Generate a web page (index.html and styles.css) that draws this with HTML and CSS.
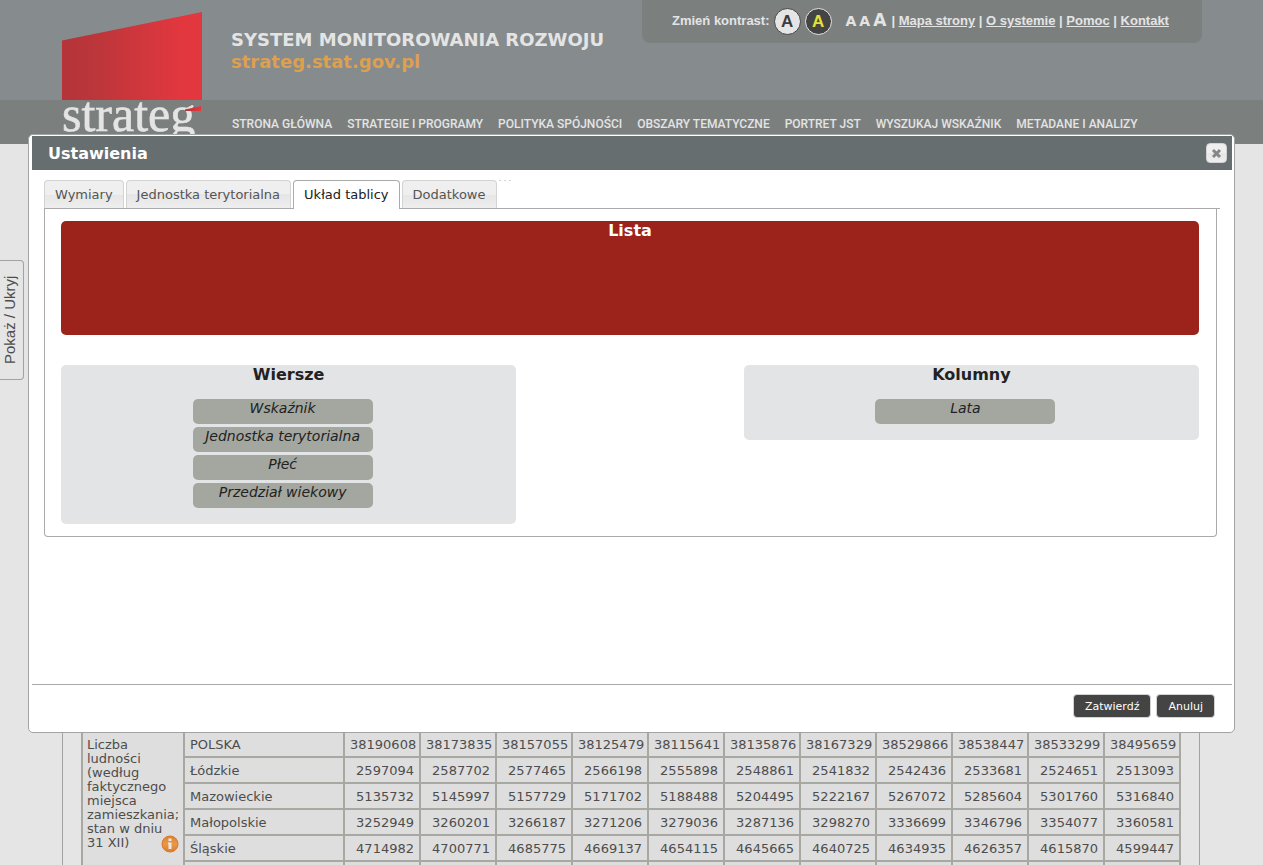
FILE: index.html
```html
<!DOCTYPE html>
<html lang="pl">
<head>
<meta charset="utf-8">
<title>STRATEG - System Monitorowania Rozwoju</title>
<link rel="stylesheet" href="styles.css">
</head>
<body>
<header class="header">
  <a class="logo" href="#" aria-label="strateg">
    <svg class="logo-art" width="142" height="138" viewBox="0 0 142 138">
      <defs>
        <linearGradient id="red" x1="0" x2="1" y1="0" y2="0">
          <stop offset="0" stop-color="#b43439"/>
          <stop offset="0.25" stop-color="#bc363a"/>
          <stop offset="0.85" stop-color="#e2373f"/>
          <stop offset="1" stop-color="#e3373f"/>
        </linearGradient>
      </defs>
      <path d="M0 28.500L140 0V88H0Z" fill="url(#red)"/>
      <text class="logo-text" x="0" y="119">strateg</text>
      <path d="M123 97.500L139 94V99H123Z" fill="url(#red)"/>
    </svg>
  </a>
  <div class="brand">
    <div class="brand-name">SYSTEM MONITOROWANIA ROZWOJU</div>
    <div class="brand-url">strateg.stat.gov.pl</div>
  </div>
  <div class="tools">
    <span>Zmień kontrast:</span>
    <button class="contrast contrast-light" type="button">A</button>
    <button class="contrast contrast-dark" type="button">A</button>
    <span class="sizes">
      <button class="size" type="button">A</button>
      <button class="size" type="button">A</button>
      <button class="size size-big" type="button">A</button>
    </span>
    <span class="links">| <a href="#">Mapa strony</a> | <a href="#">O systemie</a> | <a href="#">Pomoc</a> | <a href="#">Kontakt</a></span>
  </div>
  <nav class="nav">
    <a href="#">STRONA GŁÓWNA</a>
    <a href="#">STRATEGIE I PROGRAMY</a>
    <a href="#">POLITYKA SPÓJNOŚCI</a>
    <a href="#">OBSZARY TEMATYCZNE</a>
    <a href="#">PORTRET JST</a>
    <a href="#">WYSZUKAJ WSKAŹNIK</a>
    <a href="#">METADANE I ANALIZY</a>
  </nav>
</header>

<main class="content">
  <table class="data">
    <colgroup>
      <col class="col-name"><col class="col-region"><col span="11">
    </colgroup>
    <tbody>
      <tr>
        <th class="indicator" rowspan="6" scope="rowgroup">
          <div class="indicator-box">Liczba ludności (według faktycznego miejsca zamieszkania; stan w dniu 31&nbsp;XII)
            <svg class="info" width="18" height="18" viewBox="0 0 18 18">
              <defs><linearGradient id="orange" x1="0" x2="0" y1="0" y2="1"><stop offset="0" stop-color="#df8030"/><stop offset="0.500" stop-color="#e89a48"/><stop offset="1" stop-color="#dd7b2c"/></linearGradient></defs>
              <circle cx="9" cy="9" r="8" fill="url(#orange)" stroke="#d97829"/>
              <path d="M7.500 3.500H10.500V6H7.500ZM7 7.500H10.500V14H7.500V9H7Z" fill="#e9e9e9"/>
            </svg>
          </div>
        </th>
        <th scope="row">POLSKA</th><td>38190608</td><td>38173835</td><td>38157055</td><td>38125479</td><td>38115641</td><td>38135876</td><td>38167329</td><td>38529866</td><td>38538447</td><td>38533299</td><td>38495659</td>
      </tr>
      <tr><th scope="row">Łódzkie</th><td>2597094</td><td>2587702</td><td>2577465</td><td>2566198</td><td>2555898</td><td>2548861</td><td>2541832</td><td>2542436</td><td>2533681</td><td>2524651</td><td>2513093</td></tr>
      <tr><th scope="row">Mazowieckie</th><td>5135732</td><td>5145997</td><td>5157729</td><td>5171702</td><td>5188488</td><td>5204495</td><td>5222167</td><td>5267072</td><td>5285604</td><td>5301760</td><td>5316840</td></tr>
      <tr><th scope="row">Małopolskie</th><td>3252949</td><td>3260201</td><td>3266187</td><td>3271206</td><td>3279036</td><td>3287136</td><td>3298270</td><td>3336699</td><td>3346796</td><td>3354077</td><td>3360581</td></tr>
      <tr><th scope="row">Śląskie</th><td>4714982</td><td>4700771</td><td>4685775</td><td>4669137</td><td>4654115</td><td>4645665</td><td>4640725</td><td>4634935</td><td>4626357</td><td>4615870</td><td>4599447</td></tr>
      <tr><th scope="row"></th><td></td><td></td><td></td><td></td><td></td><td></td><td></td><td></td><td></td><td></td><td></td></tr>
    </tbody>
  </table>
</main>

<button class="side-tab" type="button">Pokaż / Ukryj</button>

<section class="dialog" role="dialog" aria-labelledby="dialog-title">
  <div class="dialog-bar">
    <h1 class="dialog-title" id="dialog-title">Ustawienia</h1>
    <button class="close" type="button" aria-label="Zamknij">
      <svg width="11" height="11" viewBox="0 0 11 11"><path d="M2 2L9 9M9 2L2 9" stroke="#868686" stroke-width="3"/></svg>
    </button>
  </div>
  <div class="dialog-body">
    <div class="tabs" role="tablist">
      <button class="tab" type="button" role="tab">Wymiary</button>
      <button class="tab" type="button" role="tab">Jednostka terytorialna</button>
      <button class="tab tab-active" type="button" role="tab" aria-selected="true">Układ tablicy</button>
      <button class="tab" type="button" role="tab">Dodatkowe</button>
      <span class="stub"></span><span class="stub"></span><span class="stub"></span>
    </div>
    <div class="panel" role="tabpanel">
      <div class="zone zone-list"><h2 class="zone-title">Lista</h2></div>
      <div class="zones">
        <div class="zone">
          <h2 class="zone-title">Wiersze</h2>
          <ul class="items">
            <li class="item">Wskaźnik</li>
            <li class="item">Jednostka terytorialna</li>
            <li class="item">Płeć</li>
            <li class="item">Przedział wiekowy</li>
          </ul>
        </div>
        <div class="zone">
          <h2 class="zone-title">Kolumny</h2>
          <ul class="items"><li class="item">Lata</li></ul>
        </div>
      </div>
    </div>
  </div>
  <div class="dialog-foot">
    <button class="action" type="button">Zatwierdź</button>
    <button class="action" type="button">Anuluj</button>
  </div>
</section>
</body>
</html>
```
FILE: styles.css
```css
* { box-sizing: border-box; }

body {
  position: relative;
  display: flex;
  flex-direction: column;
  height: 100vh;
  margin: 0;
  overflow: hidden;
  background: #e5e5e5;
  color: #4d4d4d;
  font-family: "DejaVu Sans", sans-serif;
  font-size: 13px;
}

button { padding: 0; border: 0; background: none; color: inherit; font: inherit; }

/* Page header */
.header {
  display: grid;
  flex: none;
  grid-template-columns: 140px 1fr auto;
  grid-template-rows: 100px 44px;
  column-gap: 29px;
  padding: 0 61px 0 62px;
  background: linear-gradient(#868b8d 100px, #7b807f 100px);
  color: #e4e4e4;
}
.logo { grid-row: 1 / 3; padding-top: 12px; }
.logo-art { display: block; }
.logo-text {
  fill: #e4e4e4;
  stroke: #e4e4e4;
  stroke-width: 0.6;
  font-family: "Liberation Serif", serif;
  font-size: 50px;
}
.brand { padding-top: 29px; font-size: 18px; font-weight: bold; line-height: 22px; white-space: nowrap; }
.brand-url { color: #dda050; }
.tools {
  display: flex;
  gap: 4px;
  width: 560px;
  height: 43px;
  padding: 8px 0 0 30px;
  border-radius: 0 0 8px 8px;
  background: #7b807f;
  font: bold 13px/26px "Liberation Sans", sans-serif;
  white-space: nowrap;
}
.contrast {
  width: 27px;
  height: 27px;
  border: 1px solid #444;
  border-radius: 50%;
  background: #e5e5e5;
  color: #3c3c3c;
  font-size: 17px;
  line-height: 24px;
}
.contrast-dark { border-color: #e5e5e5; background: #444; color: #e4e038; }
.sizes { display: flex; align-items: baseline; gap: 3px; margin: 0 1px 0 10px; }
.size { font: bold 14px/24px "DejaVu Sans", sans-serif; }
.size-big { font-size: 17px; }
.links a { color: inherit; }
.nav {
  display: flex;
  grid-column: 2 / 4;
  gap: 15px;
  padding: 16px 0 0 1px;
  font: 500 12px/16px Roboto, sans-serif;
  white-space: nowrap;
}
.nav a { color: inherit; text-decoration: none; }

/* Data table */
.content {
  flex: 1;
  min-height: 0;
  margin: 0 63px 0 62px;
  padding: 586px 18px 0;
  border: solid #a3a4a2;
  border-width: 0 1px;
  overflow: hidden;
}
.data { width: 100%; table-layout: fixed; border-collapse: collapse; background: #dedede; }
.col-name { width: 102px; }
.col-region { width: 160px; }
.data th, .data td {
  height: 26px;
  padding: 2px 5px 0;
  border: 2px solid #a7a8a2;
  font-weight: normal;
  line-height: 14px;
  text-align: right;
}
.data th { text-align: left; }
.data .indicator { padding: 6px 0 0 4px; vertical-align: top; }
.indicator-box { position: relative; }
.info { position: absolute; right: 4px; bottom: -3px; }

/* Side toggle */
.side-tab {
  position: absolute;
  top: 260px;
  left: 0;
  width: 24px;
  height: 120px;
  padding-left: 4px;
  border: solid #a3a3a3;
  border-width: 1px 0 1px 1px;
  border-radius: 4px 0 0 4px;
  font: 15px/20px "Liberation Sans", sans-serif;
  writing-mode: vertical-rl;
  transform: rotate(180deg);
}

/* Settings dialog */
.dialog {
  position: absolute;
  top: 134px;
  right: 28px;
  left: 28px;
  display: flex;
  flex-direction: column;
  min-height: 599px;
  padding: 1px 2px 1px 3px;
  border: 1px solid #a3a3a3;
  border-radius: 5px;
  background: #fff;
  color: #222;
}
.dialog-bar {
  display: flex;
  align-items: center;
  justify-content: space-between;
  height: 34px;
  padding: 0 5px 0 16px;
  background: #666e70;
}
.dialog-title { margin: 0; color: #fff; font-size: 16px; }
.close {
  display: flex;
  align-items: center;
  justify-content: center;
  width: 21px;
  height: 20px;
  border: 1px solid #d3d3d3;
  border-radius: 4px;
  background: linear-gradient(#efefef 50%, #e6e6e6 50%, #eee);
}
.dialog-body { flex: 1; padding: 10px 12px 0; }
.tabs { display: flex; gap: 2px; border-bottom: 1px solid #aaa; }
.tab {
  height: 28px;
  padding: 0 10px;
  border: 1px solid #d3d3d3;
  border-bottom: 0;
  border-radius: 4px 4px 0 0;
  background: linear-gradient(#efefef 50%, #e6e6e6 50%, #eee);
  color: #555;
}
.tab-active {
  height: 29px;
  margin-bottom: -1px;
  padding-bottom: 1px;
  border-color: #aaa;
  background: #fff;
  color: #212121;
}
.stub { width: 2px; margin-right: 1px; border-top: 1px solid #d3d3d3; }
.panel {
  margin-right: 3px;
  padding: 12px 17px 12px 16px;
  border: 1px solid #aaa;
  border-top: 0;
  border-radius: 0 0 4px 4px;
}
.zones { display: flex; align-items: flex-start; justify-content: space-between; margin-top: 30px; }
.zone { width: 40%; padding-bottom: 13px; border-radius: 5px; background: #e2e4e6; }
.zone-list { width: 100%; min-height: 114px; background: #9b231c; color: #fff; }
.zone-title { margin: 0; font-size: 16px; line-height: 19px; text-align: center; }
.items { margin: 15px 12px 0 0; padding: 0; list-style: none; }
.item {
  width: 180px;
  height: 25px;
  margin: 0 auto 3px;
  border-radius: 5px;
  background: #a4a79f;
  font-size: 14px;
  font-style: italic;
  line-height: 18px;
  text-align: center;
}
.dialog-foot {
  display: flex;
  justify-content: flex-end;
  gap: 5px;
  height: 47px;
  padding: 9px 17px 0;
  border-top: 1px solid #aaa;
}
.action {
  height: 24px;
  padding: 0 11px;
  border: 1px solid #d3d3d3;
  border-radius: 4px;
  background: #444;
  color: #fff;
  font-size: 11px;
}
```
